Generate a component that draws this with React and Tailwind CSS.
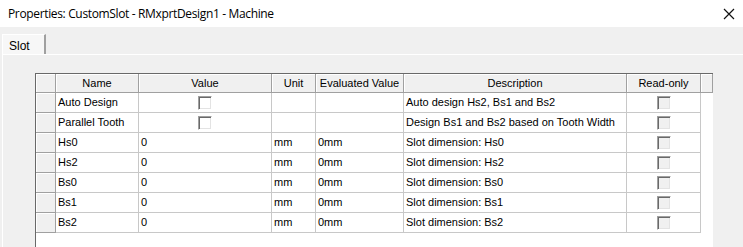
import React from "react";

const cols = "grid-cols-[20px_83px_133px_44px_88px_223px_74px_12px]";

const rows = [
  { name: "Auto Design", check: true, desc: "Auto design Hs2, Bs1 and Bs2" },
  { name: "Parallel Tooth", check: true, desc: "Design Bs1 and Bs2 based on Tooth Width" },
  { name: "Hs0", value: "0", unit: "mm", ev: "0mm", desc: "Slot dimension: Hs0" },
  { name: "Hs2", value: "0", unit: "mm", ev: "0mm", desc: "Slot dimension: Hs2" },
  { name: "Bs0", value: "0", unit: "mm", ev: "0mm", desc: "Slot dimension: Bs0" },
  { name: "Bs1", value: "0", unit: "mm", ev: "0mm", desc: "Slot dimension: Bs1" },
  { name: "Bs2", value: "0", unit: "mm", ev: "0mm", desc: "Slot dimension: Bs2" },
];

function CheckBox({ disabled }) {
  return (
    <div
      className={`w-[14px] h-[14px] border border-t-[#a0a0a0] border-l-[#a0a0a0] border-r-white border-b-white ${
        disabled ? "bg-[#f0f0f0]" : "bg-white"
      } shadow-[inset_1px_1px_0_#696969,inset_-1px_-1px_0_#e3e3e3]`}
    />
  );
}

function HeadCell({ children }) {
  return (
    <div className="h-[19px] flex items-center justify-center bg-[#f0f0f0] border-r border-b border-[#a0a0a0] shadow-[inset_1px_1px_0_#ffffff]">
      {children}
    </div>
  );
}

function Cell({ children, center }) {
  return (
    <div
      className={`h-[20px] flex items-center border-r border-b border-[#c8c8c8] bg-white ${
        center ? "justify-center" : "pl-[2px]"
      }`}
    >
      {children}
    </div>
  );
}

export default function App() {
  return (
    <div className="w-[743px] h-[247px] overflow-hidden bg-[#f0f0f0] text-black font-['Liberation_Sans',Arial,sans-serif] text-[11px]">
      <div className="h-[27px] bg-white flex items-center justify-between pl-[8px] pr-[4px]">
        <span className="text-[12px] font-['Open_Sans','Noto_Sans',sans-serif] tracking-[-0.35px]">
          Properties: CustomSlot - RMxprtDesign1 - Machine
        </span>
        <svg width="12" height="12" viewBox="0 0 12 12" className="mr-[4px]">
          <path d="M1 1 L11 11 M11 1 L1 11" stroke="#111" strokeWidth="1.2" />
        </svg>
      </div>

      <div className="h-[27px] pt-[7px] pl-[2px] flex items-end">
        <div className="w-[44px] h-[20px] bg-[#f7f7f7] border-t border-l border-white border-r-2 border-r-[#a0a0a0] pl-[6px] pt-[2px] text-[12px]">
          Slot
        </div>
      </div>

      <div className="h-[193px] ml-[2px] border-t border-l border-white pt-[18px] pl-[32px]">
        <div className="w-[678px] h-[200px] bg-white border-l border-t border-[#696969]">
          <div className={`grid ${cols}`}>
            <HeadCell />
            <HeadCell>Name</HeadCell>
            <HeadCell>Value</HeadCell>
            <HeadCell>Unit</HeadCell>
            <HeadCell>Evaluated Value</HeadCell>
            <HeadCell>Description</HeadCell>
            <HeadCell>Read-only</HeadCell>
            <HeadCell />
          </div>
          {rows.map((r) => (
            <div key={r.name} className={`grid ${cols}`}>
              <div className="h-[20px] bg-[#f0f0f0] border-r border-b border-[#a0a0a0] shadow-[inset_1px_1px_0_#ffffff]" />
              <Cell>{r.name}</Cell>
              {r.check ? (
                <Cell center>
                  <CheckBox />
                </Cell>
              ) : (
                <Cell>{r.value}</Cell>
              )}
              <Cell>{r.unit}</Cell>
              <Cell>{r.ev}</Cell>
              <Cell>{r.desc}</Cell>
              <Cell center>
                <CheckBox disabled />
              </Cell>
              <div />
            </div>
          ))}
        </div>
      </div>
    </div>
  );
}
